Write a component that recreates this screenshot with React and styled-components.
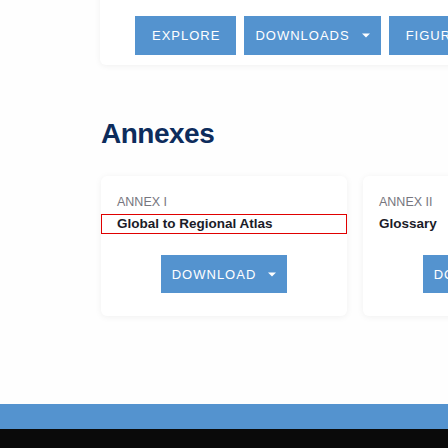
import React from "react";
import styled, { createGlobalStyle } from "styled-components";

const Global = createGlobalStyle`
  html, body { margin: 0; padding: 0; background: #fefefe; overflow: hidden; }
  body { font-family: "Liberation Sans", Arial, sans-serif; }
`;

const BLUE = "#5493cf";

const Page = styled.div`
  width: 448px;
  height: 448px;
  overflow: hidden;
  display: flex;
  flex-direction: column;
`;

const Main = styled.main`
  flex: 1;
  padding-left: 100px;
  display: flex;
  flex-direction: column;
`;

const NavCard = styled.nav`
  margin-top: -10px;
  width: 600px;
  padding: 26px 0 10px 35px;
  background: #fff;
  border-radius: 0 0 6px 6px;
  box-shadow: 0 1px 6px rgba(0, 0, 0, 0.06);
  display: flex;
  gap: 8px;
  box-sizing: border-box;
`;

const Button = styled.button`
  height: ${(p) => p.$h || 39}px;
  padding: 0 ${(p) => (p.$menu ? 11 : 16)}px 0 ${(p) => (p.$menu ? 11 : 17)}px;
  border: none;
  background: ${BLUE};
  color: #fff;
  font-family: "Liberation Sans", Arial, sans-serif;
  font-size: 13px;
  letter-spacing: 1px;
  text-transform: uppercase;
  display: flex;
  align-items: center;
  gap: 12px;
  flex-shrink: 0;
  cursor: pointer;
`;

const Caret = () => (
  <svg width="8" height="5" viewBox="0 0 8 5">
    <path d="M0 0.5h8L4 4.5z" fill="#fff" />
  </svg>
);

const Heading = styled.h1`
  margin: 52px 0 0 1px;
  font-size: 28px;
  line-height: 34px;
  font-weight: 700;
  letter-spacing: -0.5px;
  color: #0d2c5c;
`;

const CardRow = styled.div`
  margin: 25px 0 0 1px;
  display: flex;
  gap: 16px;
`;

const Card = styled.div`
  width: 246px;
  flex-shrink: 0;
  background: #fff;
  border-radius: 6px;
  box-shadow: 0 1px 7px rgba(0, 0, 0, 0.06);
  padding: 18px 0 23px;
  display: flex;
  flex-direction: column;
`;

const Label = styled.div`
  padding-left: 16px;
  font-size: 12.5px;
  line-height: 16px;
  color: #76767e;
  text-transform: uppercase;
`;

const Title = styled.a`
  margin-top: 4px;
  padding: 0 15px;
  border: 1px solid ${(p) => (p.$focused ? "#e00000" : "transparent")};
  font-size: 13.5px;
  line-height: 18px;
  font-weight: 700;
  color: #1b1c28;
  text-decoration: none;
  display: block;
`;

const CardActions = styled.div`
  margin-top: 21px;
  display: flex;
  justify-content: center;
`;

const Footer = styled.footer`
  display: flex;
  flex-direction: column;
`;

const FooterBand = styled.div`
  height: 25px;
  background: ${BLUE};
`;

const FooterBase = styled.div`
  height: 19px;
  background: #0a0a0a;
`;

const annexes = [
  { label: "Annex I", title: "Global to Regional Atlas", focused: true },
  { label: "Annex II", title: "Glossary" },
];

export default function App() {
  return (
    <Page>
      <Global />
      <Main>
        <NavCard>
          <Button>Explore</Button>
          <Button $menu>
            Downloads <Caret />
          </Button>
          <Button>Figures</Button>
        </NavCard>
        <Heading>Annexes</Heading>
        <CardRow>
          {annexes.map((a) => (
            <Card key={a.label}>
              <Label>{a.label}</Label>
              <Title href="#" $focused={a.focused}>
                {a.title}
              </Title>
              <CardActions>
                <Button $menu $h={38}>
                  Download <Caret />
                </Button>
              </CardActions>
            </Card>
          ))}
        </CardRow>
      </Main>
      <Footer>
        <FooterBand />
        <FooterBase />
      </Footer>
    </Page>
  );
}
